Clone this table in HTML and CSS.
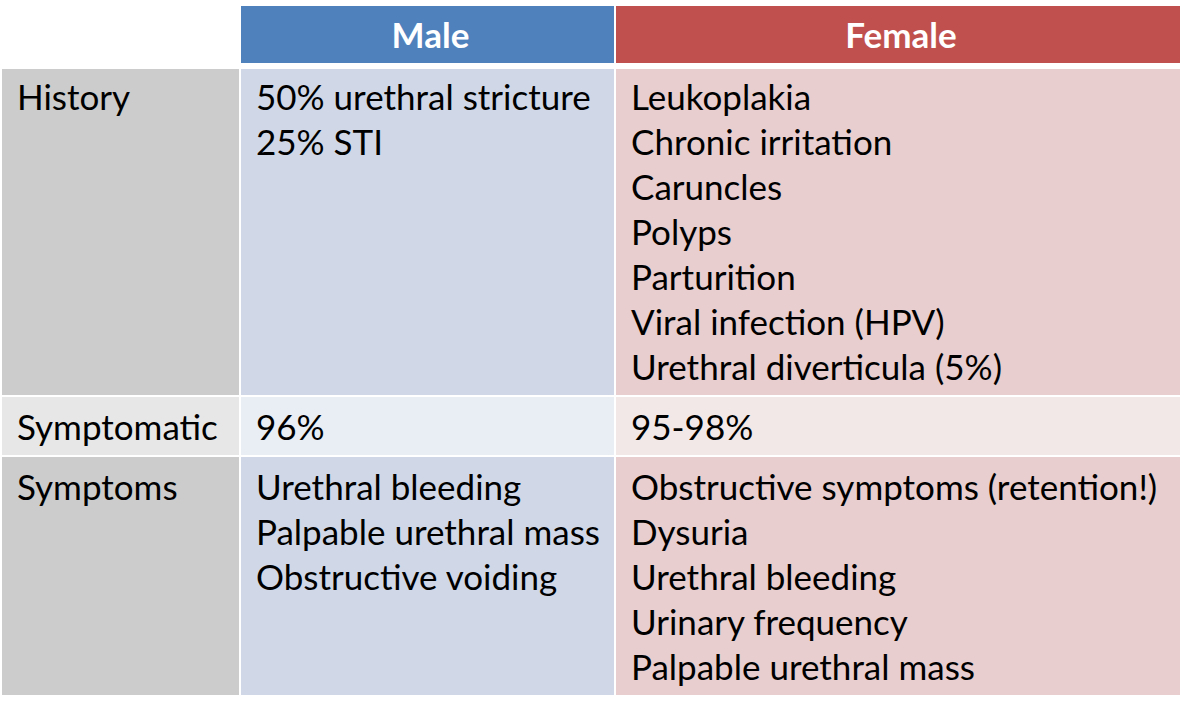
FILE: index.html
```html
<!DOCTYPE html>
<html lang="en">
<head>
<meta charset="utf-8">
<title>Urethral carcinoma: male vs female</title>
<link rel="stylesheet" href="styles.css">
</head>
<body>
<div class="table">
  <div class="cell corner"></div>
  <div class="cell head male">Male</div>
  <div class="cell head female">Female</div>

  <div class="cell label band">History</div>
  <div class="cell m band">50% urethral stricture<br>25% STI</div>
  <div class="cell f band">Leukoplakia<br>Chronic irritation<br>Caruncles<br>Polyps<br>Parturition<br>Viral infection (HPV)<br>Urethral diverticula (5%)</div>

  <div class="cell label light low">Symptomatic</div>
  <div class="cell m light low">96%</div>
  <div class="cell f light low">95-98%</div>

  <div class="cell label band low">Symptoms</div>
  <div class="cell m band low">Urethral bleeding<br>Palpable urethral mass<br>Obstructive voiding</div>
  <div class="cell f band low">Obstructive symptoms (retention!)<br>Dysuria<br>Urethral bleeding<br>Urinary frequency<br>Palpable urethral mass</div>
</div>
</body>
</html>
```

FILE: styles.css
```css
html, body {
  margin: 0;
  padding: 0;
  background: #ffffff;
}
body {
  padding: 6px 0 0 2px;
  font-family: Lato, "Open Sans", sans-serif;
  color: #000000;
}
.table {
  display: grid;
  grid-template-columns: 237px 373px 564px;
  grid-template-rows: 61px 326px 58px 238px;
  column-gap: 2px;
  row-gap: 2px;
  width: 1178px;
}
.cell {
  font-size: 35px;
  line-height: 45px;
  padding: 5px 0 0 15px;
  box-sizing: border-box;
  white-space: nowrap;
}
.cell.low {
  padding-top: 7px;
}
.corner {
  background: #ffffff;
}
.head {
  color: #ffffff;
  font-weight: bold;
  text-align: center;
  padding: 6px 0 0 6px;
  margin-bottom: 4px;
}
.male { background: #4f81bd; }
.female { background: #c0504d; }
.label { background: #cccccc; }
.label.light { background: #e7e7e7; }
.m { background: #d0d8e8; }
.m.light { background: #e9edf4; }
.f { background: #e8cece; }
.f.light { background: #f3e8e8; }
```
